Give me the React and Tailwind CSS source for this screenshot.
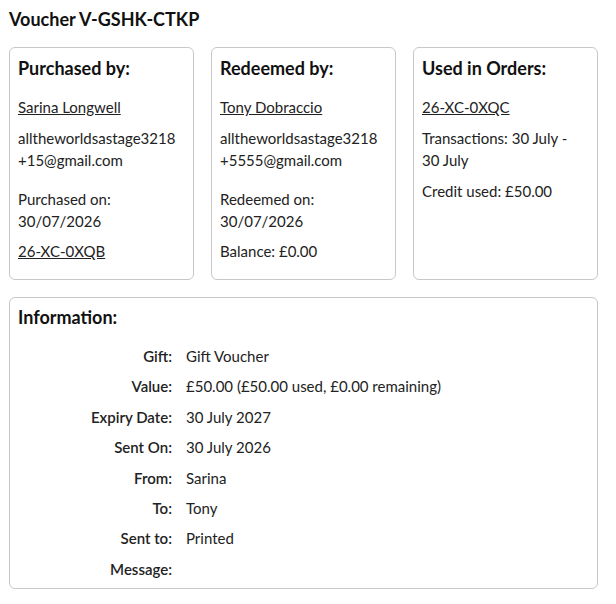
const font = { fontFamily: 'Lato, "Open Sans", sans-serif' };

function Card({ title, children }) {
    return (
        <div className="flex-1 rounded-md border border-[#c8c8c8] px-[8px] pt-[9px] pb-[17px]">
            <h3 className="text-[18px] font-bold leading-[22px] mb-[17px] text-[#111]">{title}</h3>
            {children}
        </div>
    );
}

const rows = [
    ['Gift:', 'Gift Voucher'],
    ['Value:', '£50.00 (£50.00 used, £0.00 remaining)'],
    ['Expiry Date:', '30 July 2027'],
    ['Sent On:', '30 July 2026'],
    ['From:', 'Sarina'],
    ['To:', 'Tony'],
    ['Sent to:', 'Printed'],
    ['Message:', ''],
];

export default function App() {
    return (
        <div className="bg-white w-[616px] h-[604px] px-[9px] pt-[8px] text-[15px] leading-[22px] text-[#222]" style={font}>
            <h2 className="text-[18px] font-bold leading-[22px] mb-[17px] text-[#111]">Voucher V-GSHK-CTKP</h2>

            <div className="flex gap-[17px] mr-[9px]">
                {/* Purchased */}
                <Card title="Purchased by:">
                    <a className="underline block mb-[9px]">Sarina Longwell</a>
                    <p className="mb-[17px]">alltheworldsastage3218<br />+15@gmail.com</p>
                    <p className="mb-[8px]">Purchased on:<br />30/07/2026</p>
                    <a className="underline block">26-XC-0XQB</a>
                </Card>

                {/* Redeemed */}
                <Card title="Redeemed by:">
                    <a className="underline block mb-[9px]">Tony Dobraccio</a>
                    <p className="mb-[17px]">alltheworldsastage3218<br />+5555@gmail.com</p>
                    <p className="mb-[8px]">Redeemed on:<br />30/07/2026</p>
                    <p>Balance: £0.00</p>
                </Card>

                {/* Orders */}
                <Card title="Used in Orders:">
                    <a className="underline block mb-[9px]">26-XC-0XQC</a>
                    <p className="mb-[9px]">Transactions: 30 July -<br />30 July</p>
                    <p>Credit used: £50.00</p>
                </Card>
            </div>

            <div className="mt-[17px] mr-[9px] rounded-md border border-[#c8c8c8] px-[8px] pt-[8px] pb-[8px]">
                <h3 className="text-[18px] font-bold leading-[22px] mb-[17px] text-[#111]">Information:</h3>
                <div className="grid grid-cols-[154px_1fr] gap-x-[14px] gap-y-[8.4px]">
                    {rows.map(([label, value]) => (
                        <div key={label} className="contents">
                            <span className="text-right font-semibold">{label}</span>
                            <span>{value}</span>
                        </div>
                    ))}
                </div>
            </div>
        </div>
    );
}
